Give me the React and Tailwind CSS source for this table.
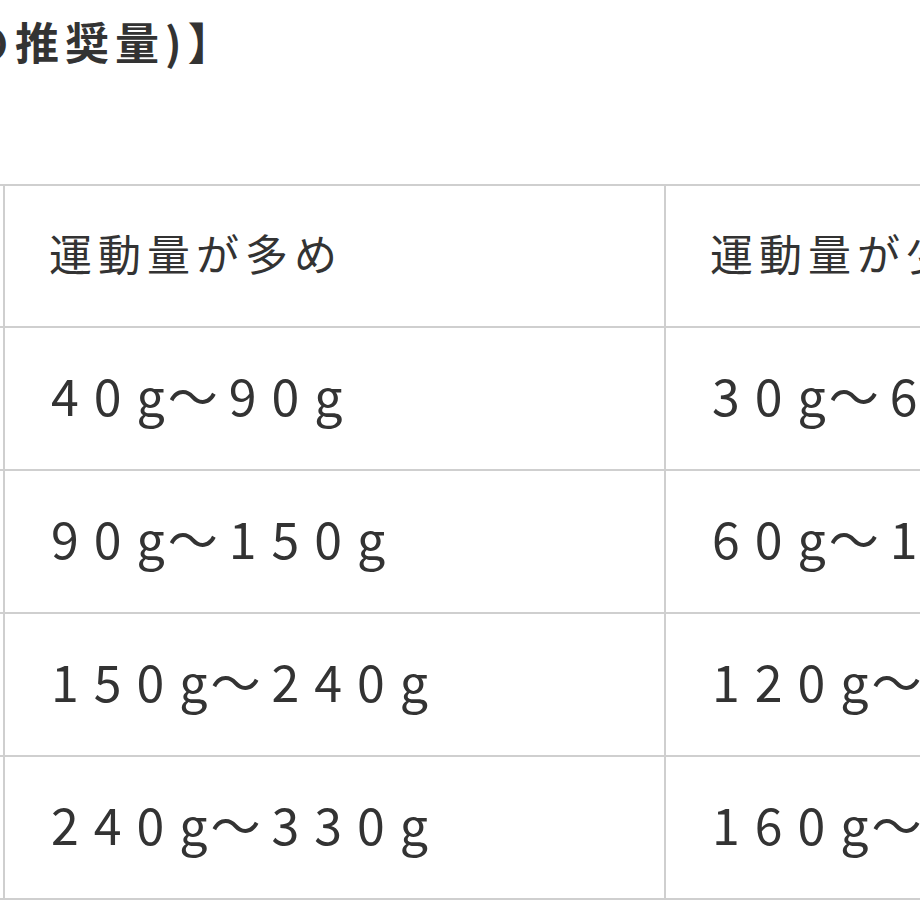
const rows = [
  ["40g", "90g", "30g", "60g"],
  ["90g", "150g", "60g", "120g"],
  ["150g", "240g", "120g", "160g"],
  ["240g", "330g", "160g", "220g"],
];

const font = { fontFamily: '"Noto Sans CJK JP", "Noto Sans", sans-serif' };

// 「g」の後ろを詰めて波ダッシュを左寄せ
function Range({ from, to }) {
  return (
    <>
      {from.slice(0, -1)}
      <span className="tracking-[3px]">{from.slice(-1)}</span>
      <span className="tracking-[11px]">～</span>
      {to}
    </>
  );
}

export default function App() {
  return (
    <div className="w-[920px] h-[920px] overflow-hidden bg-white text-[#333]" style={font}>
      <h2 className="ml-[-35px] pt-[8px] text-[44px] leading-[66px] font-bold tracking-[6px] whitespace-nowrap">
        の推奨量)】
      </h2>
      <table className="mt-[110px] ml-[-120px] border-collapse table-fixed w-[1446px]">
        <colgroup>
          <col className="w-[123px]" />
          <col className="w-[661px]" />
          <col className="w-[662px]" />
        </colgroup>
        <thead>
          <tr className="h-[142px]">
            <th className="border-2 border-[#cfcfcf]"></th>
            <th className="border-2 border-[#cfcfcf] pl-[44px] pb-[8px] text-left font-normal text-[43px] tracking-[6px] whitespace-nowrap">
              運動量が多め
            </th>
            <th className="border-2 border-[#cfcfcf] pl-[44px] pb-[8px] text-left font-normal text-[43px] tracking-[6px] whitespace-nowrap">
              運動量が少なめ
            </th>
          </tr>
        </thead>
        <tbody>
          {rows.map((r, i) => (
            <tr key={i} className="h-[143px]">
              <td className="border-2 border-[#cfcfcf]"></td>
              <td className="border-2 border-[#cfcfcf] pl-[46px] pb-[8px] text-[50px] tracking-[15px] whitespace-nowrap">
                <Range from={r[0]} to={r[1]} />
              </td>
              <td className="border-2 border-[#cfcfcf] pl-[46px] pb-[8px] text-[50px] tracking-[15px] whitespace-nowrap">
                <Range from={r[2]} to={r[3]} />
              </td>
            </tr>
          ))}
        </tbody>
      </table>
    </div>
  );
}
